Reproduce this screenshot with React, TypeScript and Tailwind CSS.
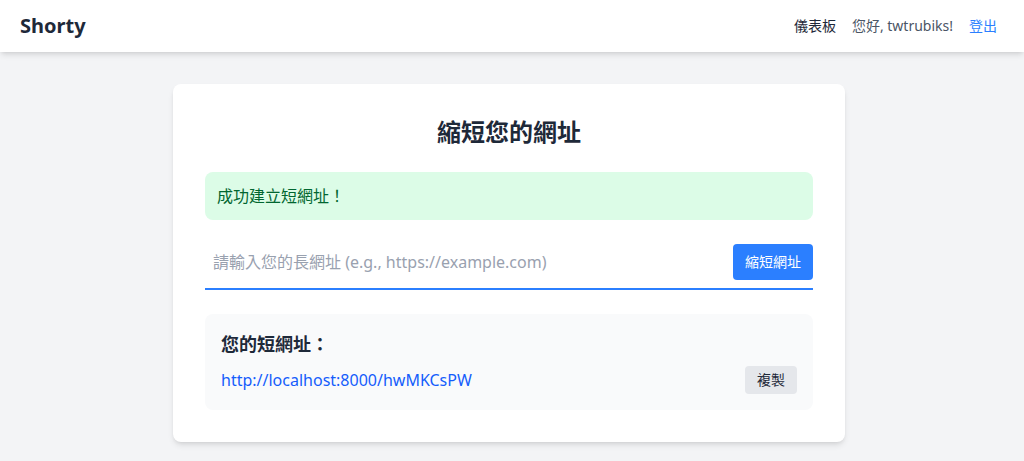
import React from "react";

export default function App() {
  return (
    <div
      className="min-h-screen bg-gray-100"
      style={{ fontFamily: '"Noto Sans", "Noto Sans CJK TC", sans-serif' }}
    >
      <nav className="bg-white shadow-md">
        <div className="flex items-center justify-between py-3 pl-5 pr-[27px]">
          <span className="text-xl font-bold text-gray-800">Shorty</span>
          <div className="flex items-center gap-4 text-sm">
            <span className="text-gray-800">儀表板</span>
            <span className="text-gray-600">您好, twtrubiks!</span>
            <span className="text-blue-500">登出</span>
          </div>
        </div>
      </nav>
      <main className="flex justify-center pt-8 pr-[6px]">
        <div className="w-[672px] rounded-lg bg-white p-8 shadow-md">
          <h1 className="mb-6 text-center text-2xl font-bold text-gray-800">縮短您的網址</h1>
          <div className="mb-4 rounded-lg bg-[#dcfce7] p-3 text-base text-green-800">成功建立短網址！</div>
          <form className="flex items-center border-b-2 border-blue-500 py-2">
            <input
              type="text"
              placeholder="請輸入您的長網址 (e.g., https://example.com)"
              className="mr-3 w-full flex-1 bg-transparent px-2 py-1 text-base text-gray-700 placeholder-gray-400 outline-none"
            />
            <button type="button" className="rounded bg-blue-500 px-3 py-2 text-sm text-white">
              縮短網址
            </button>
          </form>
          <div className="mt-6 rounded-lg bg-gray-50 p-4">
            <h2 className="mb-2 text-lg font-semibold text-gray-800">您的短網址：</h2>
            <div className="flex items-center justify-between">
              <span className="text-base text-blue-600">http://localhost:8000/hwMKCsPW</span>
              <button type="button" className="rounded bg-gray-200 px-3 py-1 text-sm text-gray-800">
                複製
              </button>
            </div>
          </div>
        </div>
      </main>
    </div>
  );
}
